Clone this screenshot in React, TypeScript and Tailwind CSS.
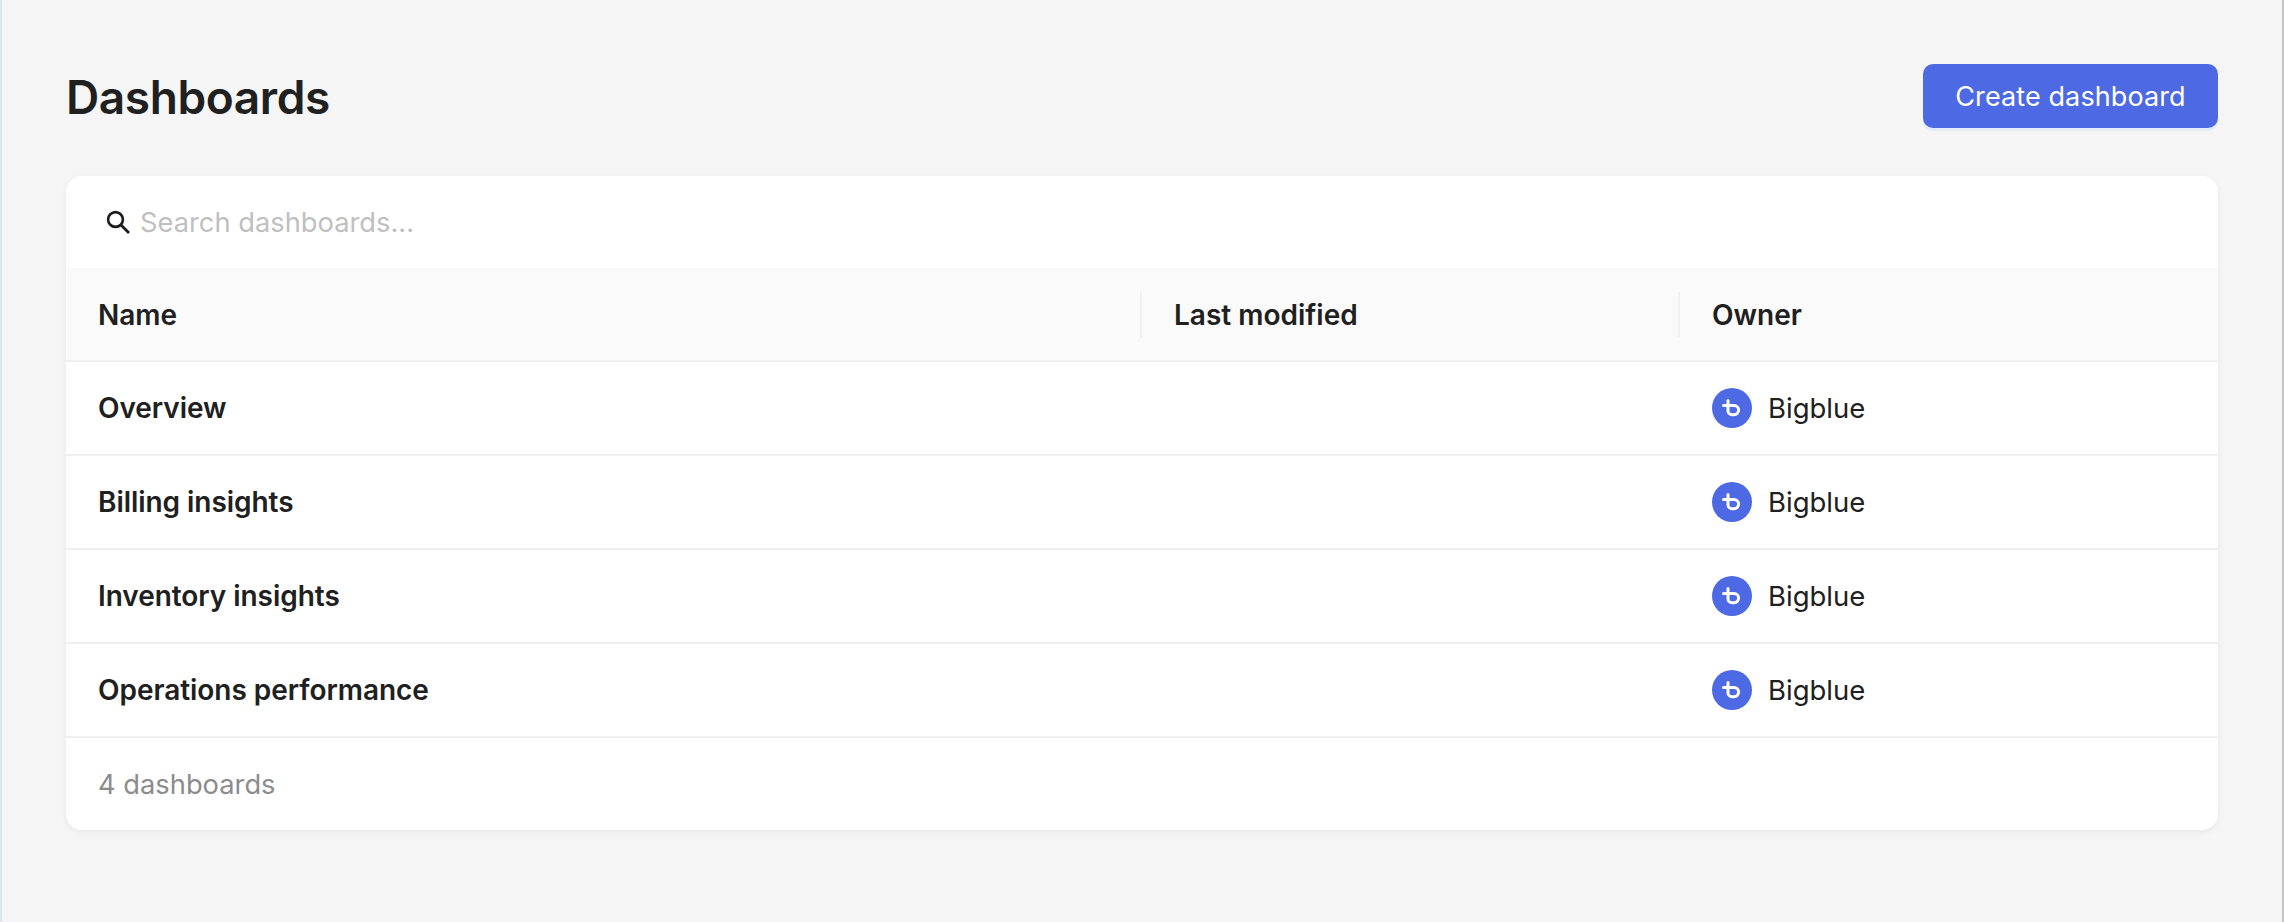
import React from "react";

const ROWS = ["Overview", "Billing insights", "Inventory insights", "Operations performance"];
const COLS = "grid grid-cols-[1074px_538px_1fr]";

// Owner avatar: the "b" glyph mark in a blue disc
const OwnerMark = () => (
  <svg width="40" height="40" viewBox="0 0 40 40" className="shrink-0">
    <circle cx="20" cy="20" r="20" fill="#4d69e4" />
    <path
      d="M11.5 17.5H22a4.6 4.6 0 0 1 0 9.2H20a4 4 0 0 1-4-4V12.5"
      fill="none"
      stroke="#fff"
      strokeWidth="3"
      strokeLinecap="round"
    />
  </svg>
);

const SearchIcon = () => (
  <svg width="26" height="26" viewBox="0 0 26 26" className="shrink-0">
    <circle cx="10.5" cy="10.5" r="7.4" fill="none" stroke="#1c1c1c" strokeWidth="2.6" />
    <path d="M16 16L24 24" stroke="#1c1c1c" strokeWidth="2.8" />
  </svg>
);

export default function App() {
  return (
    <div
      className="min-h-[922px] border-l-2 border-r-2 border-l-[#dde7ea] border-r-[#c4c4c4] bg-[#f5f5f5] px-[64px] text-[#202020]"
      style={{ fontFamily: "Inter, 'Liberation Sans', sans-serif" }}
    >
      <div className="flex h-[176px] items-start justify-between pt-[64px]">
        <h1 className="pt-[1px] text-[46px] leading-[64px] font-semibold tracking-[-0.4px]">Dashboards</h1>
        <button className="h-[64px] w-[295px] rounded-[10px] bg-[#4d69e4] pt-[2px] text-[27px] tracking-[0.1px] text-white shadow-[0_3px_0_#e6ebf6]">
          Create dashboard
        </button>
      </div>

      <div className="overflow-hidden rounded-[16px] bg-white shadow-[0_2px_6px_rgba(0,0,0,0.06)]">
        <div className="flex h-[92px] items-center pl-[39px]">
          <SearchIcon />
          <span className="ml-[9px] pt-[2px] text-[27.3px] text-[#bfbfbf]">Search dashboards...</span>
        </div>

        <div className={`${COLS} h-[94px] items-center border-b-2 border-[#efefef] bg-[#fafafa] pt-[1px] text-[28px] font-semibold`}>
          <div className="pl-[32px]">Name</div>
          <div className="flex h-[46px] items-center border-l-2 border-[#f0f0f0] pl-[32px]">Last modified</div>
          <div className="flex h-[46px] items-center border-l-2 border-[#f0f0f0] pl-[32px]">Owner</div>
        </div>

        {ROWS.map((name) => (
          <div key={name} className={`${COLS} h-[94px] items-center border-b-2 border-[#efefef] text-[28px]`}>
            <div className="pl-[32px] font-semibold tracking-[-0.05px]">{name}</div>
            <div />
            <div className="flex items-center pl-[34px]">
              <OwnerMark />
              <span className="ml-[16px] pt-[1px] text-[27.5px]">Bigblue</span>
            </div>
          </div>
        ))}

        <div className="flex h-[92px] items-center pl-[32px] pt-[2px] text-[27.3px] text-[#8c8c8c]">4 dashboards</div>
      </div>
    </div>
  );
}
